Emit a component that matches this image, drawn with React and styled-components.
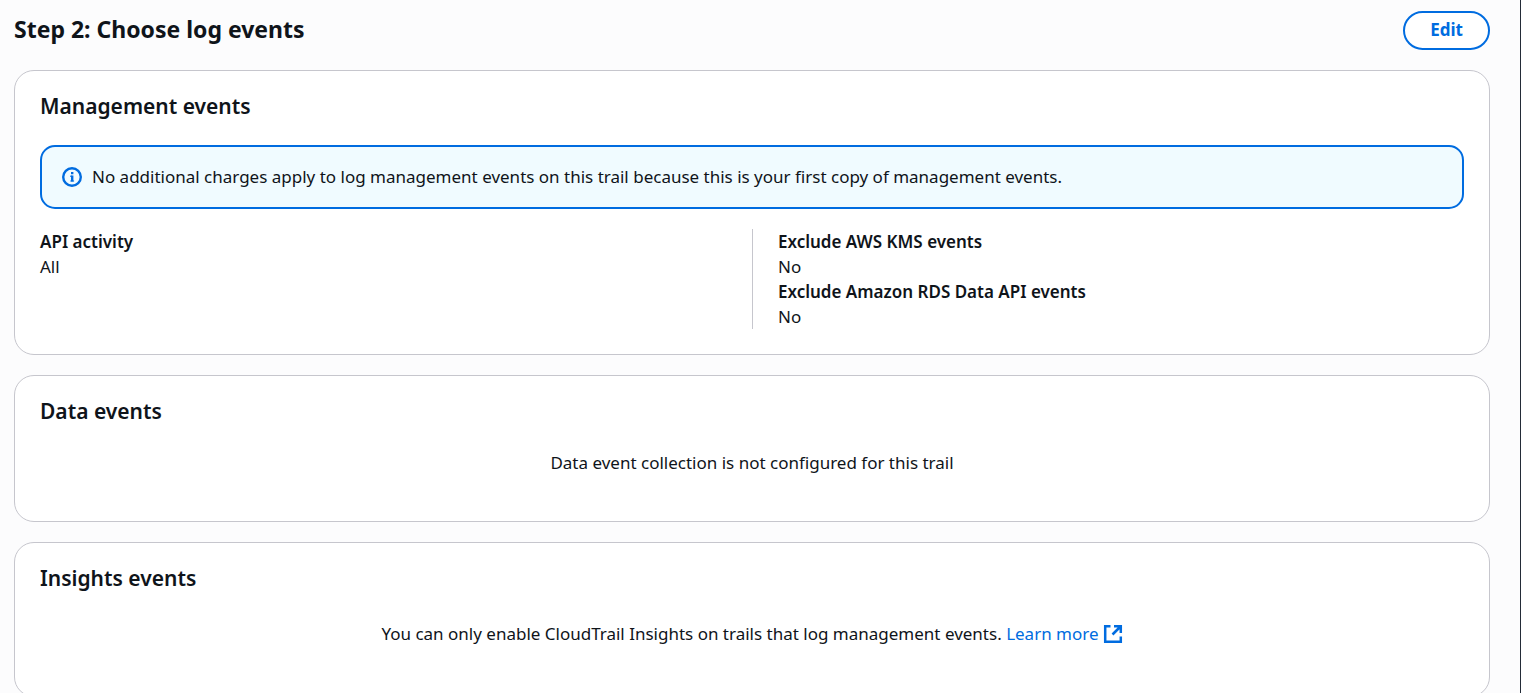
import React from "react";
import styled, { createGlobalStyle } from "styled-components";

const blue = "#006ce0";

const GlobalStyle = createGlobalStyle`
  *, *::before, *::after { box-sizing: border-box; }
  html { scrollbar-width: none; background: #fcfcfd; }
  body {
    margin: 0;
    color: #0f141a;
    font-family: "Noto Sans", "Open Sans", sans-serif;
    font-size: 17px;
    line-height: 25px;
  }
`;

const Page = styled.main`
  min-height: 100vh;
  padding: 11px 30px 20px 14px;
  border-right: 1px solid #232b37;
`;

const StepHeader = styled.header`
  display: flex;
  align-items: flex-start;
  justify-content: space-between;
  margin-bottom: 20px;
`;

const StepTitle = styled.h2`
  margin: 0;
  font-size: 23px;
  line-height: 36px;
  font-weight: 700;
`;

const EditButton = styled.button`
  height: 39px;
  padding: 0 25px 2px;
  border: 2px solid ${blue};
  border-radius: 20px;
  background: #fff;
  color: ${blue};
  font: inherit;
  font-weight: 700;
  cursor: pointer;
`;

const Sections = styled.div`
  display: flex;
  flex-direction: column;
  gap: 20px;
`;

const Card = styled.section`
  padding: 20px 25px 25px;
  border: 1px solid #c6c6cd;
  border-radius: 20px;
  background: #fff;
`;

const CardTitle = styled.h3`
  margin: 0;
  font-size: 21px;
  line-height: 30px;
  font-weight: 600;
`;

const Alert = styled.div`
  display: flex;
  align-items: center;
  gap: 10px;
  margin: 24px 0 20px;
  padding: 16px 20px;
  border: 2px solid ${blue};
  border-radius: 15px;
  background: #f0fbff;
  line-height: 28px;

  svg { flex: none; }
`;

const Columns = styled.div`
  display: grid;
  grid-template-columns: 1fr 1fr;
`;

const Details = styled.dl`
  margin: 0;
  padding-left: ${(p) => (p.$divided ? "25px" : "0")};
  border-left: ${(p) => (p.$divided ? "1px solid #c6c6cd" : "0")};

  dt { font-weight: 600; }
  dd { margin: 0; }
`;

const Message = styled.p`
  margin: 0;
  padding: ${(p) => (p.$roomy ? "28px 0 25px" : "24px 0 21px")};
  text-align: center;
`;

const Link = styled.a`
  color: ${blue};
  text-decoration: none;

  svg { margin-left: 4px; vertical-align: -4px; }
`;

const InfoIcon = () => (
  <svg width="20" height="20" viewBox="0 0 20 20" fill="none" stroke={blue} aria-hidden="true">
    <circle cx="10" cy="10" r="8.8" strokeWidth="2.4" />
    <path d="M10.2 14.5V8.5M10.2 7.2V5" strokeWidth="2.4" />
    <path d="M8 9.2h2M8.3 14h3.8" strokeWidth="1" />
  </svg>
);

const ExternalIcon = () => (
  <svg width="20" height="20" viewBox="0 0 20 20" fill="none" stroke={blue} strokeWidth="2.5" role="img" aria-label="Opens in a new tab">
    <path d="M7.5 2.2H2.2v15.6h15.6V12.5" />
    <path d="M11 2.2h6.8V9M17.5 2.5L9.5 10.5" />
  </svg>
);

export default function App() {
  return (
    <>
      <GlobalStyle />
      <Page>
        <StepHeader>
          <StepTitle>Step 2: Choose log events</StepTitle>
          <EditButton type="button">Edit</EditButton>
        </StepHeader>
        <Sections>
          <Card>
            <CardTitle>Management events</CardTitle>
            <Alert>
              <InfoIcon />
              <span>
                No additional charges apply to log management events on this trail because this is your first copy of management events.
              </span>
            </Alert>
            <Columns>
              <Details>
                <dt>API activity</dt>
                <dd>All</dd>
              </Details>
              <Details $divided>
                <dt>Exclude AWS KMS events</dt>
                <dd>No</dd>
                <dt>Exclude Amazon RDS Data API events</dt>
                <dd>No</dd>
              </Details>
            </Columns>
          </Card>
          <Card>
            <CardTitle>Data events</CardTitle>
            <Message>Data event collection is not configured for this trail</Message>
          </Card>
          <Card>
            <CardTitle>Insights events</CardTitle>
            <Message $roomy>
              You can only enable CloudTrail Insights on trails that log management events.{" "}
              <Link href="#learn-more">
                Learn more
                <ExternalIcon />
              </Link>
            </Message>
          </Card>
        </Sections>
      </Page>
    </>
  );
}
